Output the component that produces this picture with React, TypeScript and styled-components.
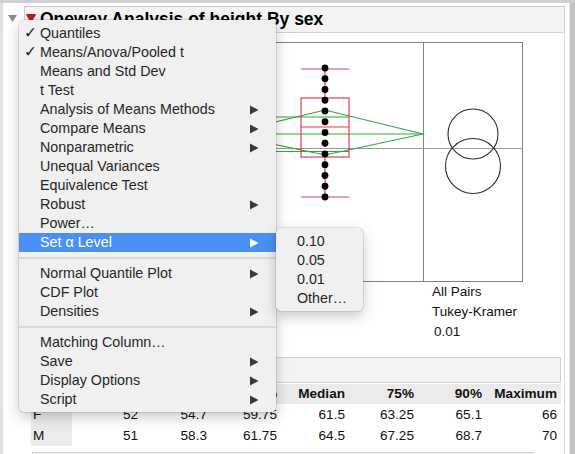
import React from 'react';
import styled, { createGlobalStyle } from 'styled-components';

const GlobalStyle = createGlobalStyle`
  html, body {
    margin: 0;
    padding: 0;
    background: #fff;
  }
  body {
    font-family: 'Liberation Sans', Arial, sans-serif;
    color: #111;
  }
`;

const Window = styled.div`
  position: relative;
  width: 575px;
  height: 454px;
  box-sizing: border-box;
  overflow: hidden;
  display: flex;
  background: #fff;
  border-top: 3px solid #cfcfcf;
`;

const Report = styled.div`
  flex: 1;
  border-left: 3px solid #e2e2e2;
  padding-top: 3px;
  display: grid;
  grid-template-columns: 21px 541px;
  align-content: start;
`;

const ScrollTrack = styled.div`
  width: 5px;
  margin-left: 3px;
  background: #c3c3c3;
  border-left: 1px solid #e4e4e4;
`;

const Toggle = styled.svg`
  display: block;
  margin: 9px 0 0 5px;
`;

const TitleBox = styled.div`
  box-sizing: border-box;
  height: 27px;
  border: 1px solid #cfcfcf;
  background: #f3f3f3;
  display: flex;
  align-items: center;
  gap: 4px;
  padding-left: 1px;
`;

const TitleText = styled.span`
  font-size: 17.5px;
  font-weight: bold;
  color: #000;
  white-space: nowrap;
`;

const RedTriangle = styled.svg`
  display: block;
  margin-top: -3px;
`;

const Body = styled.div`
  grid-column: 2;
  border-right: 1px solid #dadada;
  padding-bottom: 40px;
`;

const Plot = styled.svg`
  display: block;
  margin: 9px 0 0 16px;
`;

const Caption = styled.div`
  margin-left: 408px;
  font-size: 13.5px;
  line-height: 20px;
  color: #111;
`;

const CaptionLine = styled.div<{ $indent?: number }>`
  padding-left: ${(p) => p.$indent || 0}px;
`;

const SubHeader = styled.div`
  box-sizing: border-box;
  margin: 15px 0 0 6px;
  width: 531px;
  height: 26px;
  border: 1px solid #cfcfcf;
  background: #f3f3f3;
  display: flex;
  align-items: center;
  gap: 6px;
  padding-left: 4px;
  font-size: 14px;
  font-weight: bold;
`;

const Table = styled.div`
  margin: 1px 0 0 7px;
  width: 530px;
  font-size: 13.6px;
`;

const Row = styled.div<{ $head?: boolean }>`
  display: grid;
  grid-template-columns: 41px 66px 69px 70px 68px 69px 68px 75px;
  padding-right: 4px;
  height: ${(p) => (p.$head ? 20 : 21)}px;
  line-height: ${(p) => (p.$head ? 20 : 21)}px;
  background: ${(p) => (p.$head ? '#ebebeb' : 'transparent')};
  font-weight: ${(p) => (p.$head ? 'bold' : 'normal')};
`;

const Cell = styled.div`
  text-align: right;
  white-space: nowrap;
`;

const LabelCell = styled.div<{ $shade?: boolean }>`
  padding-left: 2px;
  background: ${(p) => (p.$shade ? '#ebebeb' : 'transparent')};
`;

const NextHeader = styled.div`
  box-sizing: border-box;
  margin: 6px 0 0 8px;
  width: 502px;
  height: 24px;
  border: 1px solid #cfcfcf;
  background: #f3f3f3;
`;

const Menu = styled.div<{ $left: number; $top: number; $width: number }>`
  position: absolute;
  left: ${(p) => p.$left}px;
  top: ${(p) => p.$top}px;
  width: ${(p) => p.$width}px;
  box-sizing: border-box;
  padding: 4px 0 3px;
  background: #f0f0f0;
  border-radius: 5px;
  box-shadow: 0 0 0 0.5px rgba(0, 0, 0, 0.18), 0 5px 14px rgba(0, 0, 0, 0.22);
  font-size: 14.3px;
  color: #262626;
  z-index: 2;
`;

const Item = styled.div<{ $active?: boolean }>`
  display: grid;
  grid-template-columns: 21px 1fr 26px;
  align-items: center;
  height: 19px;
  line-height: 19px;
  white-space: nowrap;
  background: ${(p) => (p.$active ? '#4a90f4' : 'transparent')};
  color: ${(p) => (p.$active ? '#fff' : '#262626')};
`;

const Check = styled.span`
  padding-left: 5px;
  font-family: 'DejaVu Sans', sans-serif;
  font-size: 15.5px;
  line-height: 19px;
  color: #222;
`;

const Arrow = styled.svg`
  display: block;
`;

const Separator = styled.div`
  height: 2px;
  margin: 5px 0;
  background: #dadada;
`;

type MenuEntry = { label?: string; checked?: boolean; sub?: boolean; active?: boolean; sep?: boolean };

const mainItems: MenuEntry[] = [
  { label: 'Quantiles', checked: true },
  { label: 'Means/Anova/Pooled t', checked: true },
  { label: 'Means and Std Dev' },
  { label: 't Test' },
  { label: 'Analysis of Means Methods', sub: true },
  { label: 'Compare Means', sub: true },
  { label: 'Nonparametric', sub: true },
  { label: 'Unequal Variances' },
  { label: 'Equivalence Test' },
  { label: 'Robust', sub: true },
  { label: 'Power…' },
  { label: 'Set α Level', sub: true, active: true },
  { sep: true },
  { label: 'Normal Quantile Plot', sub: true },
  { label: 'CDF Plot' },
  { label: 'Densities', sub: true },
  { sep: true },
  { label: 'Matching Column…' },
  { label: 'Save', sub: true },
  { label: 'Display Options', sub: true },
  { label: 'Script', sub: true },
];

const alphaItems = ['0.10', '0.05', '0.01', 'Other…'];

const columns = ['Level', 'Minimum', '10%', '25%', 'Median', '75%', '90%', 'Maximum'];
const rows = [
  ['F', '52', '54.7', '59.75', '61.5', '63.25', '65.1', '66'],
  ['M', '51', '58.3', '61.75', '64.5', '67.25', '68.7', '70'],
];

const MenuItem: React.FC<{ entry: MenuEntry }> = ({ entry }) => (
  <Item $active={entry.active}>
    <Check>{entry.checked ? '✓' : ''}</Check>
    <span>{entry.label}</span>
    {entry.sub ? (
      <Arrow width="9" height="10" viewBox="0 0 9 10">
        <polygon points="0,0.5 8.5,5 0,9.5" fill={entry.active ? '#fff' : '#3a3a3a'} />
      </Arrow>
    ) : (
      <span />
    )}
  </Item>
);

const OnewayPlot: React.FC = () => {
  const red = '#e23d56';
  const green = '#2fa83a';
  const dots = Array.from({ length: 13 }, (_, i) => 26 + i * 10.75);
  return (
    <Plot width="490" height="240" viewBox="0 0 490 240">
      <rect x="30.5" y="0.5" width="452" height="239" fill="none" stroke="#7f7f7f" />
      <line x1="383.5" y1="0" x2="383.5" y2="240" stroke="#7f7f7f" />
      <line x1="30" y1="106.5" x2="483" y2="106.5" stroke="#9a9a9a" />

      <line x1="30" y1="92" x2="383" y2="92" stroke="#74c77a" strokeWidth="1.6" />
      <polygon points="185,92 285,68 383,92 285,113" fill="none" stroke={green} strokeWidth="1.2" />
      <line x1="225" y1="75" x2="309" y2="75" stroke={green} strokeWidth="1.2" />
      <line x1="225" y1="109.5" x2="309" y2="109.5" stroke={green} strokeWidth="1.2" />

      <g stroke={red} strokeWidth="1.2" fill="none">
        <line x1="261" y1="27" x2="309" y2="27" />
        <line x1="261" y1="155" x2="309" y2="155" />
        <line x1="285" y1="27" x2="285" y2="56" />
        <line x1="285" y1="115" x2="285" y2="155" />
        <rect x="261" y="56" width="48" height="59" />
        <line x1="261" y1="85" x2="309" y2="85" />
      </g>

      {dots.map((cy) => (
        <circle key={cy} cx="285" cy={cy} r="3.4" fill="#000" />
      ))}

      <circle cx="433" cy="92" r="25" fill="none" stroke="#2b2b2b" strokeWidth="1.1" />
      <circle cx="433" cy="124" r="27.5" fill="none" stroke="#2b2b2b" strokeWidth="1.1" />
    </Plot>
  );
};

export default function App() {
  return (
    <>
      <GlobalStyle />
      <Window>
        <Report>
          <Toggle width="9" height="7" viewBox="0 0 9 7">
            <polygon points="0,0 9,0 4.5,7" fill="#8a8a8a" />
          </Toggle>
          <TitleBox>
            <RedTriangle width="10" height="9" viewBox="0 0 10 9">
              <polygon points="0.5,0.5 9.5,0.5 5,8.5" fill="#d4141c" stroke="#8a0a0f" strokeWidth="0.8" />
            </RedTriangle>
            <TitleText>Oneway Analysis of height By sex</TitleText>
          </TitleBox>

          <Body>
            <OnewayPlot />
            <Caption>
              <CaptionLine>All Pairs</CaptionLine>
              <CaptionLine>Tukey-Kramer</CaptionLine>
              <CaptionLine $indent={2}>0.01</CaptionLine>
            </Caption>

            <SubHeader>
              <svg width="10" height="9" viewBox="0 0 10 9">
                <polygon points="0.5,0.5 9.5,0.5 5,8.5" fill="#d4141c" />
              </svg>
              Quantiles
            </SubHeader>
            <Table>
              <Row $head>
                {columns.map((c, i) =>
                  i === 0 ? <LabelCell key={c}>{c}</LabelCell> : <Cell key={c}>{c}</Cell>
                )}
              </Row>
              {rows.map((r) => (
                <Row key={r[0]}>
                  {r.map((v, i) =>
                    i === 0 ? (
                      <LabelCell key={i} $shade>
                        {v}
                      </LabelCell>
                    ) : (
                      <Cell key={i}>{v}</Cell>
                    )
                  )}
                </Row>
              ))}
            </Table>
            <NextHeader />
          </Body>
        </Report>
        <ScrollTrack />

        <Menu $left={19} $top={17} $width={257}>
          {mainItems.map((entry, i) =>
            entry.sep ? <Separator key={i} /> : <MenuItem key={i} entry={entry} />
          )}
        </Menu>
        <Menu $left={276} $top={225} $width={87}>
          {alphaItems.map((label) => (
            <MenuItem key={label} entry={{ label }} />
          ))}
        </Menu>
      </Window>
    </>
  );
}
